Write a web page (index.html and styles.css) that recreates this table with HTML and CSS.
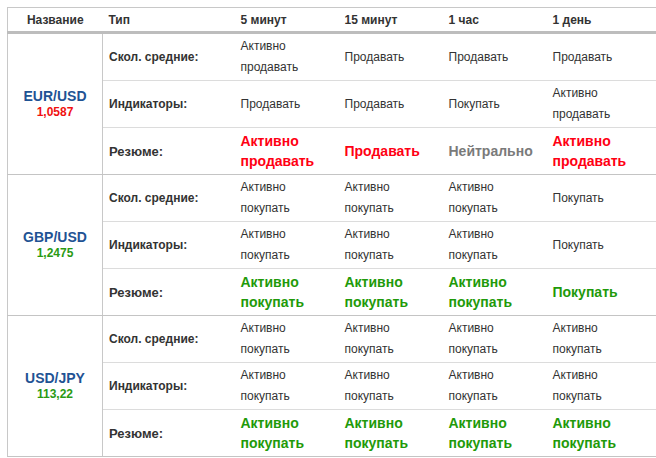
FILE: index.html
```html
<!DOCTYPE html>
<html lang="ru">
<head>
<meta charset="utf-8">
<link rel="stylesheet" href="styles.css">
</head>
<body>
<table class="tech">
  <colgroup>
    <col class="c-name"><col class="c-type"><col class="c-per"><col class="c-per"><col class="c-per"><col class="c-last">
  </colgroup>
  <thead>
    <tr><th class="h-name">Название</th><th>Тип</th><th>5 минут</th><th>15 минут</th><th>1 час</th><th>1 день</th></tr>
  </thead>
  <tbody class="grp">
    <tr>
      <td class="name" rowspan="3"><div class="pair">EUR/USD</div><div class="price down">1,0587</div></td>
      <td class="type">Скол. средние:</td>
      <td>Активно<br>продавать</td><td>Продавать</td><td>Продавать</td><td>Продавать</td>
    </tr>
    <tr>
      <td class="type">Индикаторы:</td>
      <td>Продавать</td><td>Продавать</td><td>Покупать</td><td>Активно<br>продавать</td>
    </tr>
    <tr class="sum">
      <td class="type">Резюме:</td>
      <td class="sell">Активно<br>продавать</td><td class="sell">Продавать</td><td class="neutral">Нейтрально</td><td class="sell">Активно<br>продавать</td>
    </tr>
  </tbody>
  <tbody class="grp">
    <tr>
      <td class="name" rowspan="3"><div class="pair">GBP/USD</div><div class="price up">1,2475</div></td>
      <td class="type">Скол. средние:</td>
      <td>Активно<br>покупать</td><td>Активно<br>покупать</td><td>Активно<br>покупать</td><td>Покупать</td>
    </tr>
    <tr>
      <td class="type">Индикаторы:</td>
      <td>Активно<br>покупать</td><td>Активно<br>покупать</td><td>Активно<br>покупать</td><td>Покупать</td>
    </tr>
    <tr class="sum">
      <td class="type">Резюме:</td>
      <td class="buy">Активно<br>покупать</td><td class="buy">Активно<br>покупать</td><td class="buy">Активно<br>покупать</td><td class="buy">Покупать</td>
    </tr>
  </tbody>
  <tbody class="grp">
    <tr>
      <td class="name" rowspan="3"><div class="pair">USD/JPY</div><div class="price up">113,22</div></td>
      <td class="type">Скол. средние:</td>
      <td>Активно<br>покупать</td><td>Активно<br>покупать</td><td>Активно<br>покупать</td><td>Активно<br>покупать</td>
    </tr>
    <tr>
      <td class="type">Индикаторы:</td>
      <td>Активно<br>покупать</td><td>Активно<br>покупать</td><td>Активно<br>покупать</td><td>Активно<br>покупать</td>
    </tr>
    <tr class="sum">
      <td class="type">Резюме:</td>
      <td class="buy">Активно<br>покупать</td><td class="buy">Активно<br>покупать</td><td class="buy">Активно<br>покупать</td><td class="buy">Активно<br>покупать</td>
    </tr>
  </tbody>
</table>
</body>
</html>
```

FILE: styles.css
```css
html, body {
  margin: 0;
  background: #fff;
}
body {
  padding: 7px 0 0 7px;
  font-family: "Liberation Sans", Arial, sans-serif;
  font-size: 12px;
  color: #333;
}
.tech {
  border-collapse: collapse;
  table-layout: fixed;
  width: 649px;
  border-top: 1px solid #c8c8c8;
  border-left: 1px solid #c8c8c8;
}
.c-name { width: 95px; }
.c-type { width: 132px; }
.c-per { width: 104px; }
.c-last { width: 110px; }

thead th {
  height: 23px;
  padding: 0 6px;
  text-align: left;
  font-weight: bold;
  font-size: 12px;
  color: #333;
  border-bottom: 3px solid #bdbdbd;
  vertical-align: middle;
}
thead th.h-name { text-align: center; }

td {
  height: 46px;
  padding: 0 6px;
  line-height: 21px;
  vertical-align: middle;
  border-bottom: 1px solid #dcdcdc;
}
.grp tr.sum td { border-bottom: 1px solid #c4c4c4; }
td.name {
  text-align: center;
  border-right: 1px solid #c8c8c8;
  border-bottom: 1px solid #c4c4c4;
  line-height: 16px;
}
.pair {
  font-weight: bold;
  font-size: 14px;
  color: #1f5394;
}
.price {
  font-weight: bold;
  font-size: 12px;
}
.price.down { color: #f01010; }
.price.up { color: #2a9a12; }
td.type {
  font-weight: bold;
  color: #333;
}
tr.sum td.type { font-size: 13px; }
td.sell, td.buy, td.neutral {
  font-weight: bold;
  font-size: 14px;
  line-height: 20px;
}
td.sell { color: #ff0013; }
td.buy { color: #1f9a0a; }
td.neutral { color: #7a7a7a; }
```
